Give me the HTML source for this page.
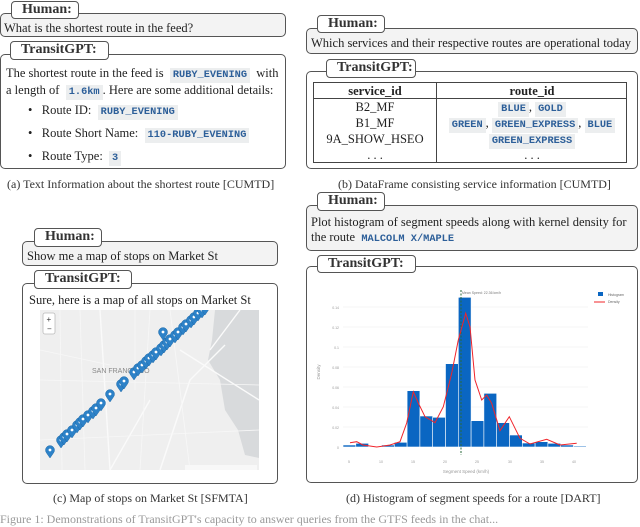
<!DOCTYPE html>
<html><head><meta charset="utf-8"><style>
*{margin:0;padding:0;box-sizing:border-box}
body{width:640px;height:521px;background:#fff;position:relative;overflow:hidden;font-family:"Liberation Serif",serif;color:#222;font-size:12.5px}
.a{position:absolute}
.box{position:absolute;border:1.3px solid #555;border-radius:5px;background:#fff}
.hbox{background:#f3f3f3}
.tab{position:absolute;border:1.3px solid #555;border-radius:4px;background:#fff;font-weight:bold;font-size:14px;line-height:16px;padding:0 7px 0 10px;z-index:2;white-space:nowrap;color:#333}
.c{font-family:"Liberation Mono",monospace;font-weight:bold;font-size:10.3px;color:#2d5f99;background:#eceeef;padding:2px 3px;display:inline-block;line-height:11px;vertical-align:baseline}
.t{position:absolute;white-space:nowrap;line-height:14px}
.cap{position:absolute;white-space:nowrap;font-size:12px;color:#333}
</style></head><body>

<!-- (a) -->
<div class="tab" style="left:11px;top:1px;width:68px;height:18px">Human:</div>
<div class="box hbox" style="left:0;top:13px;width:286px;height:24px"></div>
<div class="t" style="left:4px;top:21px">What is the shortest route in the feed?</div>
<div class="tab" style="left:10px;top:41px;width:99px;height:19px">TransitGPT:</div>
<div class="box" style="left:0;top:54px;width:286px;height:115px"></div>
<div class="t" style="left:6px;top:66px">The shortest route in the feed is &nbsp;<span class="c">RUBY_EVENING</span>&nbsp; with</div>
<div class="t" style="left:6px;top:83px">a length of &nbsp;<span class="c">1.6km</span>. Here are some additional details:</div>
<div class="t" style="left:28px;top:103px">•&nbsp;&nbsp; Route ID: &nbsp;<span class="c">RUBY_EVENING</span></div>
<div class="t" style="left:28px;top:126px">•&nbsp;&nbsp; Route Short Name: &nbsp;<span class="c">110-RUBY_EVENING</span></div>
<div class="t" style="left:28px;top:149px">•&nbsp;&nbsp; Route Type: &nbsp;<span class="c">3</span></div>
<div class="cap" style="left:7px;top:177px">(a) Text Information about the shortest route [CUMTD]</div>

<!-- (b) -->
<div class="tab" style="left:317px;top:15px;width:68px;height:18px">Human:</div>
<div class="box hbox" style="left:306px;top:28px;width:332px;height:26px"></div>
<div class="t" style="left:311px;top:36px">Which services and their respective routes are operational today</div>
<div class="tab" style="left:326px;top:59px;width:90px;height:19px">TransitGPT:</div>
<div class="box" style="left:306px;top:71px;width:332px;height:98px"></div>
<div class="a" style="left:313px;top:82px;width:314px;height:81px;border:1.2px solid #444"></div>
<div class="a" style="left:313px;top:98px;width:314px;height:1.2px;background:#444"></div>
<div class="a" style="left:436px;top:82px;width:1.2px;height:81px;background:#444"></div>
<div class="t" style="left:313px;top:84px;width:124px;text-align:center;font-weight:bold">service_id</div>
<div class="t" style="left:437px;top:84px;width:190px;text-align:center;font-weight:bold">route_id</div>
<div class="t" style="left:313px;top:99px;width:124px;text-align:center;line-height:16px">B2_MF<br>B1_MF<br>9A_SHOW_HSEO<br>. . .</div>
<div class="a" style="left:437px;top:99px;width:190px;text-align:center;line-height:16px;white-space:nowrap"><div style="height:16px"><span class="c">BLUE</span>, <span class="c">GOLD</span></div><div style="height:16px"><span class="c">GREEN</span>, <span class="c">GREEN_EXPRESS</span>, <span class="c">BLUE</span></div><div style="height:16px"><span class="c">GREEN_EXPRESS</span></div><div style="height:16px">. . .</div></div>
<div class="cap" style="left:338px;top:177px">(b) DataFrame consisting service information [CUMTD]</div>

<!-- (c) -->
<div class="tab" style="left:34px;top:228px;width:68px;height:19px">Human:</div>
<div class="box hbox" style="left:22px;top:241px;width:256px;height:25px"></div>
<div class="t" style="left:27px;top:249px">Show me a map of stops on Market St</div>
<div class="tab" style="left:34px;top:270px;width:98px;height:19px">TransitGPT:</div>
<div class="box" style="left:22px;top:283px;width:256px;height:201px"></div>
<div class="t" style="left:29px;top:293px">Sure, here is a map of all stops on Market St</div>
<div class="a" style="left:40px;top:310px;width:219px;height:160px;background:#efefef;overflow:hidden">
<svg width="219" height="160" viewBox="0 0 219 160">
<defs><symbol id="pin" viewBox="-5 -12 10 12" overflow="visible"><path d="M0 0 L-3.6 -5.2 A4.5 4.5 0 1 1 3.6 -5.2 Z" fill="#2d82c8" stroke="#1f6aa8" stroke-width=".5"/><circle cx="0" cy="-8" r="1.4" fill="#fff"/></symbol></defs>
<path d="M175 0 L219 0 L219 148 L205 145 L198 120 L185 100 L180 70 L168 50 L172 30 Z" fill="#d8dadc"/>
<path d="M200 0 L170 40 M120 160 L150 70 L185 35 M70 160 L110 90 M140 40 L219 90 M60 0 L70 160" stroke="#fafafa" stroke-width="1.4" fill="none"/>
<path d="M20 0 L22 160 M0 70 L219 75 M130 0 L150 160 M0 130 L219 120 M40 0 L45 160 M110 0 L100 160 M0 40 L70 55 M95 0 L95 80" stroke="#f7f7f7" stroke-width=".8" fill="none"/>
<text x="52" y="63" font-family="Liberation Sans" font-size="7" fill="#888">SAN FRANCISCO</text>
<rect x="3" y="3" width="12" height="21" rx="2" fill="#fff" stroke="#bbb" stroke-width=".8"/>
<text x="6.5" y="12" font-size="8" font-family="Liberation Sans" fill="#333">+</text>
<text x="7" y="21.5" font-size="8" font-family="Liberation Sans" fill="#333">−</text>
<g>
<use href="#pin" x="5" y="136" width="10" height="12"/>
<use href="#pin" x="16" y="126" width="10" height="12"/><use href="#pin" x="19" y="123" width="10" height="12"/>
<use href="#pin" x="22" y="120" width="10" height="12"/><use href="#pin" x="27" y="116" width="10" height="12"/>
<use href="#pin" x="32" y="111" width="10" height="12"/><use href="#pin" x="35" y="108" width="10" height="12"/>
<use href="#pin" x="38" y="105" width="10" height="12"/><use href="#pin" x="43" y="101" width="10" height="12"/>
<use href="#pin" x="48" y="97" width="10" height="12"/><use href="#pin" x="51" y="94" width="10" height="12"/>
<use href="#pin" x="56" y="89" width="10" height="12"/><use href="#pin" x="65" y="80" width="10" height="12"/>
<use href="#pin" x="76" y="70" width="10" height="12"/><use href="#pin" x="79" y="67" width="10" height="12"/>
<use href="#pin" x="89" y="58" width="10" height="12"/><use href="#pin" x="93" y="54" width="10" height="12"/>
<use href="#pin" x="97" y="51" width="10" height="12"/><use href="#pin" x="101" y="47" width="10" height="12"/>
<use href="#pin" x="104" y="44" width="10" height="12"/><use href="#pin" x="108" y="41" width="10" height="12"/>
<use href="#pin" x="111" y="38" width="10" height="12"/><use href="#pin" x="116" y="34" width="10" height="12"/>
<use href="#pin" x="119" y="31" width="10" height="12"/><use href="#pin" x="122" y="28" width="10" height="12"/>
<use href="#pin" x="125" y="25" width="10" height="12"/><use href="#pin" x="130" y="21" width="10" height="12"/>
<use href="#pin" x="133" y="18" width="10" height="12"/><use href="#pin" x="138" y="13" width="10" height="12"/>
<use href="#pin" x="141" y="10" width="10" height="12"/><use href="#pin" x="146" y="6" width="10" height="12"/>
<use href="#pin" x="149" y="3" width="10" height="12"/><use href="#pin" x="153" y="-1" width="10" height="12"/>
<use href="#pin" x="157" y="-4" width="10" height="12"/><use href="#pin" x="160" y="-7" width="10" height="12"/>
<use href="#pin" x="118" y="18" width="10" height="12"/>
</g>
<rect x="145" y="155" width="72" height="5" fill="#f8f8f8"/>
</svg></div>
<div class="cap" style="left:53px;top:491px">(c) Map of stops on Market St [SFMTA]</div>

<!-- (d) -->
<div class="tab" style="left:317px;top:192px;width:68px;height:19px">Human:</div>
<div class="box hbox" style="left:306px;top:205px;width:332px;height:46px"></div>
<div class="t" style="left:311px;top:215px">Plot histogram of segment speeds along with kernel density for</div>
<div class="t" style="left:311px;top:230px">the route &nbsp;<span class="c" style="background:none;padding:0">MALCOLM X/MAPLE</span></div>
<div class="tab" style="left:317px;top:255px;width:99px;height:18px">TransitGPT:</div>
<div class="box" style="left:306px;top:266px;width:332px;height:217px"></div>
<svg class="a" style="left:0;top:0" width="640" height="521" viewBox="0 0 640 521">
<g stroke="#eee" stroke-width=".6">
<line x1="343" y1="427" x2="588" y2="427"/><line x1="343" y1="407" x2="588" y2="407"/><line x1="343" y1="387" x2="588" y2="387"/><line x1="343" y1="367" x2="588" y2="367"/><line x1="343" y1="347" x2="588" y2="347"/><line x1="343" y1="327" x2="588" y2="327"/><line x1="343" y1="307" x2="588" y2="307"/></g>
<g font-family="Liberation Sans" font-size="3.5" fill="#999" text-anchor="end">
<text x="339" y="449">0</text><text x="339" y="429">0.02</text><text x="339" y="409">0.04</text><text x="339" y="389">0.06</text><text x="339" y="369">0.08</text><text x="339" y="349">0.1</text><text x="339" y="329">0.12</text><text x="339" y="309">0.14</text></g>
<g font-family="Liberation Sans" font-size="3.5" fill="#999" text-anchor="middle">
<text x="349" y="463">5</text><text x="381" y="463">10</text><text x="413" y="463">15</text><text x="445" y="463">20</text><text x="477" y="463">25</text><text x="510" y="463">30</text><text x="542" y="463">35</text><text x="574" y="463">40</text>
<text x="466" y="473" font-size="4.5">Segment Speed (km/h)</text>
<text x="320" y="372" font-size="4.5" transform="rotate(-90 320 372)">Density</text></g>
<g fill="#0a66c2" stroke="#fff" stroke-width=".6">
<rect x="343" y="445" width="12.8" height="2"/><rect x="355.8" y="443.3" width="12.8" height="3.7"/>
<rect x="381.5" y="445" width="12.8" height="2"/><rect x="394.3" y="442.3" width="12.8" height="4.7"/>
<rect x="407.1" y="390.7" width="12.8" height="56.3"/><rect x="419.9" y="416" width="12.8" height="31"/>
<rect x="432.7" y="417.3" width="12.8" height="29.7"/><rect x="445.5" y="363.7" width="12.8" height="83.3"/>
<rect x="458.3" y="297.3" width="12.8" height="149.7"/><rect x="471.1" y="420.7" width="12.8" height="26.3"/>
<rect x="483.9" y="393.3" width="12.8" height="53.7"/><rect x="496.7" y="422.7" width="12.8" height="24.3"/>
<rect x="509.5" y="435" width="12.8" height="12"/><rect x="522.3" y="443" width="12.8" height="4"/>
<rect x="535.1" y="441.7" width="12.8" height="5.3"/><rect x="547.9" y="443.3" width="12.8" height="3.7"/>
<rect x="560.7" y="445" width="12.8" height="2"/><rect x="573.5" y="446" width="12.8" height="1"/></g>
<line x1="461" y1="290" x2="461" y2="455" stroke="#2a6a3a" stroke-width="1" stroke-dasharray="2,1.5"/>
<text x="462" y="294" font-family="Liberation Sans" font-size="3.5" fill="#777">Mean Speed: 22.36 km/h</text>
<polyline fill="none" stroke="#f0242a" stroke-width="1" points="350,442.7 356.7,441.7 363,445 376.7,447 390,445 400,441.7 406.7,423 413.3,391.7 418.3,403 425,416.7 435,422.7 443.3,406.7 451.7,373.3 458.3,340 465.7,313.3 470,326.7 475,380 481.7,400 486.7,395 491.7,403.3 500,430.7 509.3,416.7 520,438.3 530,444 546.7,439.3 560,445 576.7,443.3"/>
<rect x="598" y="292" width="5" height="4" fill="#0a66c2"/>
<line x1="594" y1="302" x2="605" y2="302" stroke="#f0242a" stroke-width="1"/>
<text x="608" y="296" font-family="Liberation Sans" font-size="3.5" fill="#666">Histogram</text>
<text x="608" y="303" font-family="Liberation Sans" font-size="3.5" fill="#666">Density</text>
</svg>
<div class="cap" style="left:346px;top:491px">(d) Histogram of segment speeds for a route [DART]</div>
<div class="cap" style="left:0;top:512px;color:#999">Figure 1: Demonstrations of TransitGPT's capacity to answer queries from the GTFS feeds in the chat...</div>
</body></html>
